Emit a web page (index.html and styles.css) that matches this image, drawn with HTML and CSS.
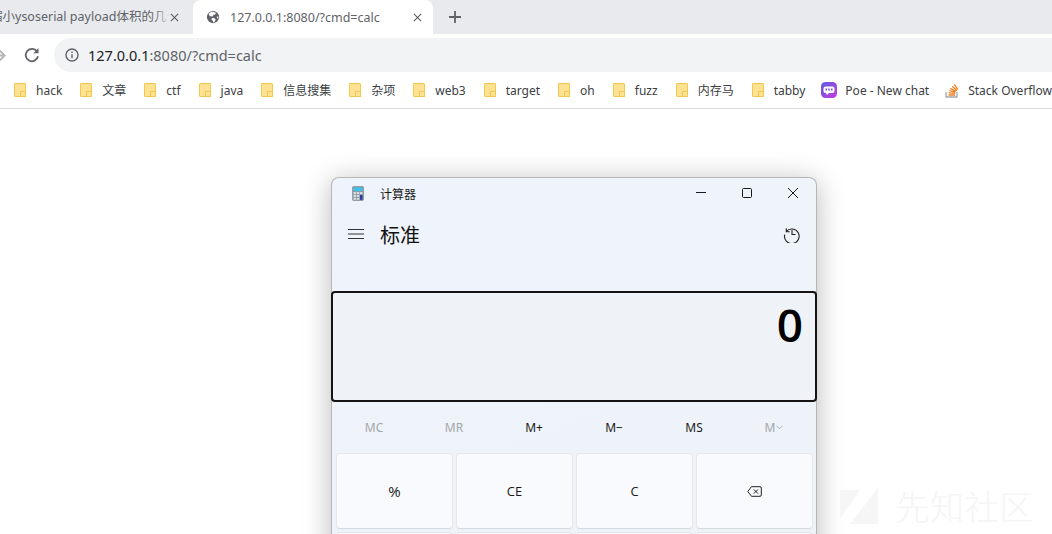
FILE: index.html
```html
<!DOCTYPE html>
<html lang="zh">
<head>
<meta charset="utf-8">
<title>127.0.0.1:8080/?cmd=calc</title>
<link rel="stylesheet" href="styles.css">
</head>
<body>
<header class="browser">
  <div class="tabstrip">
    <div class="tab tab-inactive">
      <span class="tab-title tab-title-clip"><span class="tab-title-inner">缩小ysoserial payload体积的几个方法</span></span>
      <svg class="tab-close" viewBox="0 0 10 10"><path d="M1 1l8 8M9 1l-8 8"/></svg>
    </div>
    <div class="tab tab-active">
      <svg class="globe" viewBox="0 0 16 16"><circle cx="8" cy="8" r="7" fill="#5f6368"/><path fill="#fff" d="M6 2c2 .2 4 .4 5.500 1.600L10 5.500 8.500 5 8 7 5.500 7.500 3.500 6 3 4.200zM7 9l3 .5 1 1.500-1 2-1.500 1.500L7.500 12 6 10.500zM12.500 7l1.500.6-.3 2.400-1.200-1z"/></svg>
      <span class="tab-title">127.0.0.1:8080/?cmd=calc</span>
      <svg class="tab-close" viewBox="0 0 10 10"><path d="M1 1l8 8M9 1l-8 8"/></svg>
    </div>
    <svg class="new-tab" viewBox="0 0 12 12"><path d="M6 0v12M0 6h12"/></svg>
  </div>
  <div class="toolbar">
    <svg class="nav-forward" viewBox="0 0 16 16"><path d="M0 8h13M8 2.500 13.500 8 8 13.500"/></svg>
    <svg class="nav-reload" viewBox="0 0 16 16"><path class="reload-arc" d="M13.300 5A6.200 6.200 0 1 0 14 9.300"/><path class="reload-head" d="M14.500 1v5.200H9.300z"/></svg>
    <div class="omnibox">
      <svg class="info" viewBox="0 0 14 14"><circle cx="7" cy="7" r="6"/><path d="M7 6.200v4M7 3.500v1.500"/></svg>
      <span class="url"><span class="url-host">127.0.0.1</span>:8080/?cmd=calc</span>
    </div>
  </div>
  <nav class="bookmarks">
    <a class="bm"><i class="folder"></i><span>hack</span></a>
    <a class="bm"><i class="folder"></i><span>文章</span></a>
    <a class="bm"><i class="folder"></i><span>ctf</span></a>
    <a class="bm"><i class="folder"></i><span>java</span></a>
    <a class="bm"><i class="folder"></i><span>信息搜集</span></a>
    <a class="bm"><i class="folder"></i><span>杂项</span></a>
    <a class="bm"><i class="folder"></i><span>web3</span></a>
    <a class="bm"><i class="folder"></i><span>target</span></a>
    <a class="bm"><i class="folder"></i><span>oh</span></a>
    <a class="bm"><i class="folder"></i><span>fuzz</span></a>
    <a class="bm"><i class="folder"></i><span>内存马</span></a>
    <a class="bm"><i class="folder"></i><span>tabby</span></a>
    <a class="bm bm-site">
      <svg class="poe" viewBox="0 0 16 16"><defs><linearGradient id="poeg" x1="0" y1="0" x2="1" y2="1"><stop offset="0" stop-color="#5d5cde"/><stop offset="1" stop-color="#c83be0"/></linearGradient></defs><rect width="16" height="16" rx="4.500" fill="url(#poeg)"/><rect x="2.500" y="4.500" width="11" height="6.500" rx="2" fill="#fff"/><path d="M5 11h3l-2 2z" fill="#fff"/><rect x="4.500" y="6.500" width="1.500" height="2" fill="#7a4be0"/><rect x="7.250" y="6.500" width="1.500" height="2" fill="#7a4be0"/><rect x="10" y="6.500" width="1.500" height="2" fill="#7a4be0"/></svg>
      <span>Poe - New chat</span>
    </a>
    <a class="bm bm-site">
      <svg class="so" viewBox="0 0 16 16"><path d="M2 10v5h11v-5" fill="none" stroke="#a6a6a6" stroke-width="1.300"/><path d="M4.500 13h6.500M4.700 10.800l6.400.6M5.300 8.600l6.200 1.600M6.400 6.400l5.600 3M8.200 4.300l4.700 4.200M10.400 2.300l3.300 5" fill="none" stroke="#f48024" stroke-width="1.300"/></svg>
      <span>Stack Overflow</span>
    </a>
  </nav>
</header>
<main class="page">
  <section class="calc">
    <div class="titlebar">
      <svg class="calc-icon" viewBox="0 0 12 15"><rect x=".5" y=".5" width="11" height="14" rx="1" fill="#8f98a3" stroke="#777f88" stroke-width=".6"/><rect x="1.500" y="1.500" width="9" height="3.500" fill="#3bc4ef"/><rect x="1.500" y="6" width="2.500" height="2.200" fill="#d7dbe0"/><rect x="4.800" y="6" width="2.500" height="2.200" fill="#d7dbe0"/><rect x="8" y="6" width="2.500" height="2.200" fill="#d7dbe0"/><rect x="1.500" y="9" width="2.500" height="2.200" fill="#d7dbe0"/><rect x="4.800" y="9" width="2.500" height="2.200" fill="#d7dbe0"/><rect x="1.500" y="12" width="2.500" height="1.800" fill="#d7dbe0"/><rect x="4.800" y="12" width="2.500" height="1.800" fill="#d7dbe0"/><rect x="8" y="9" width="2.500" height="4.800" fill="#2a3f9d"/></svg>
      <span class="calc-title">计算器</span>
      <div class="win-controls">
        <svg class="win-btn" viewBox="0 0 46 16"><path d="M18 15.500h10" transform="translate(0 -8)"/></svg>
        <svg class="win-btn" viewBox="0 0 46 16"><rect x="18.500" y="3.500" width="9" height="9" rx="1"/></svg>
        <svg class="win-btn" viewBox="0 0 46 16"><path d="M18 3l10 10M28 3 18 13"/></svg>
      </div>
    </div>
    <div class="calc-head">
      <svg class="hamburger" viewBox="0 0 16 12"><path d="M0 1.500h16M0 6h16M0 10.500h16"/></svg>
      <h1 class="mode">标准</h1>
      <svg class="history" viewBox="0 0 18 18"><path d="M3.300 3.300v3.400h3.400M3.300 6.500A7.300 7.300 0 1 1 1.700 9.600M9 5v4.500h3.500"/></svg>
    </div>
    <output class="display">0</output>
    <div class="memory">
      <span class="mem mem-off">MC</span>
      <span class="mem mem-off">MR</span>
      <span class="mem">M+</span>
      <span class="mem">M−</span>
      <span class="mem">MS</span>
      <span class="mem mem-off">M<svg class="mem-chev" viewBox="0 0 8 5"><path d="M.500.500 4 4 7.500.500"/></svg></span>
    </div>
    <div class="keys">
      <button class="key">%</button>
      <button class="key">CE</button>
      <button class="key">C</button>
      <button class="key"><svg class="backspace" viewBox="0 0 15 11"><path d="M4.500.700H13a1.300 1.300 0 0 1 1.300 1.300v7A1.300 1.300 0 0 1 13 10.300H4.500L.8 5.500zM6.800 3.400l4.200 4.200M11 3.400 6.800 7.600"/></svg></button>
      <button class="key"></button>
      <button class="key"></button>
      <button class="key"></button>
      <button class="key"></button>
    </div>
  </section>
  <div class="watermark">
    <svg class="wm-logo" viewBox="0 0 38 38"><path d="M0 2h20L0 30zM38 0v36H10z" fill="#f6f6f6"/></svg>
    <span class="wm-text">先知社区</span>
  </div>
</main>
</body>
</html>
```
FILE: styles.css
```css
* { box-sizing: border-box; }
html, body { margin: 0; height: 100%; overflow: hidden; background: #fff; }
body { width: 1052px; height: 534px; font-family: "Noto Sans", "Noto Sans CJK SC", sans-serif; display: flex; flex-direction: column; }

.browser { flex: none; }
.tabstrip { height: 34px; background: #e8eaed; display: flex; align-items: stretch; overflow: hidden; }
.tab { display: flex; align-items: center; height: 34px; flex: none; }
.tab-inactive { width: 193px; padding-right: 14px; }
.tab-active { width: 240px; background: #fff; border-radius: 8px 8px 0 0; padding: 0 11px 0 13px; }
.tab-title { font-size: 12.5px; color: #5f6368; white-space: nowrap; }
.tab-active .tab-title { margin-left: 10px; flex: 1; }
.tab-title-clip { flex: 1; overflow: hidden; position: relative; height: 18px; line-height: 18px; }
.tab-title-clip::after { content: ""; position: absolute; right: 0; top: 0; bottom: 0; width: 16px; background: linear-gradient(to right, rgba(232,234,237,0), #e8eaed); }
.tab-title-inner { display: block; margin-left: -10px; }
.tab-close { width: 9px; height: 9px; flex: none; fill: none; stroke: #5f6368; stroke-width: 1.300; }
.globe { width: 14px; height: 14px; flex: none; }
.new-tab { width: 12px; height: 12px; margin: 11px 0 0 16px; flex: none; fill: none; stroke: #5f6368; stroke-width: 1.800; }

.toolbar { height: 38px; padding-top: 4px; display: flex; align-items: center; background: #fff; position: relative; }
.nav-forward { width: 15px; height: 15px; margin-left: -8px; flex: none; fill: none; stroke: #b4b6b9; stroke-width: 2; }
.nav-reload { width: 16px; height: 16px; margin-left: 17px; flex: none; }
.reload-arc { fill: none; stroke: #5f6368; stroke-width: 1.800; }
.reload-head { fill: #5f6368; }
.omnibox { flex: 1; height: 34px; margin-left: 14px; background: #f1f3f4; border-radius: 17px 0 0 17px; display: flex; align-items: center; padding-left: 11px; }
.info { width: 14px; height: 14px; flex: none; fill: none; stroke: #5f6368; stroke-width: 1.400; }
.url { margin-left: 9px; font-size: 14.500px; color: #5f6368; white-space: nowrap; }
.url-host { color: #202124; }

.bookmarks { height: 37px; border-bottom: 1px solid #dadce0; background: #fff; display: flex; align-items: center; padding-left: 14px; white-space: nowrap; overflow: hidden; }
.bm { display: flex; align-items: center; gap: 10px; margin-right: 18px; font-size: 12px; color: #3c4043; flex: none; }
.folder { display: block; width: 12px; height: 14px; background: #fde293; border: 1px solid #f2c94c; border-radius: 1px; position: relative; }
.folder::after { content: ""; position: absolute; right: -1px; bottom: -1px; width: 4px; height: 4px; border: 1px solid #f2c94c; background: #fde293; }
.bm-site { gap: 8px; margin-right: 17px; margin-left: -2px; }
.poe, .so { width: 16px; height: 16px; flex: none; }

.page { flex: 1; position: relative; overflow: hidden; padding: 68px 0 0 331px; }
.calc { width: 486px; height: 420px; background: #eff3fa; border: 1px solid #b4b6ba; border-bottom: 0; border-radius: 8px 8px 0 0; box-shadow: 0 4px 28px rgba(0,0,0,.28); background-image: linear-gradient(160deg, #eff3fb, #eef3f8); }
.titlebar { height: 31px; display: flex; align-items: center; padding: 0 0 0 20px; }
.calc-icon { width: 12px; height: 15px; flex: none; }
.calc-title { margin-left: 16px; font-size: 12px; color: #1a1a1a; flex: 1; }
.win-controls { display: flex; padding-right: 0; margin-top: -1px; }
.win-btn { width: 46px; height: 16px; fill: none; stroke: #1a1a1a; stroke-width: 1; }
.calc-head { height: 50px; display: flex; align-items: center; padding: 0 15px 0 16px; }
.hamburger { width: 16px; height: 12px; flex: none; fill: none; stroke: #333; stroke-width: 1; }
.mode { flex: 1; margin: 0 0 0 16px; font-size: 20px; font-weight: 400; color: #111; }
.history { width: 18px; height: 18px; flex: none; fill: none; stroke: #222; stroke-width: 1.100; }
.display { display: block; margin: 32px -1px 0; height: 111px; border: 2px solid #141414; border-radius: 4px; background: #eff3f8; text-align: right; padding: 0 12px; font-size: 46px; line-height: 62px; font-weight: 600; color: #000; font-family: "Open Sans", sans-serif; }
.memory { display: grid; grid-template-columns: repeat(6, 80px); padding-left: 2px; height: 51px; align-items: center; }
.mem { text-align: center; font-size: 12px; color: #1a1a1a; }
.mem-off { color: #a3a6aa; }
.mem-chev { width: 7px; height: 5px; margin-left: 1px; vertical-align: 2px; fill: none; stroke: #a3a6aa; stroke-width: 1; }
.keys { display: grid; grid-template-columns: repeat(4, 117px); grid-auto-rows: 76px; gap: 3px; padding-left: 4px; }
.key { background: #f9fafd; border: 1px solid #e5e7eb; border-bottom-color: #d8dade; border-radius: 4px; font: 400 13px "Open Sans", sans-serif; color: #1a1a1a; padding: 0; display: flex; align-items: center; justify-content: center; }
.key:first-child { font-size: 15px; }
.backspace { width: 15px; height: 11px; fill: none; stroke: #222; stroke-width: 1; }

.watermark { position: absolute; left: 840px; top: 378px; display: flex; align-items: center; gap: 17px; }
.wm-logo { width: 38px; height: 38px; flex: none; }
.wm-text { font-size: 34.500px; line-height: 40px; letter-spacing: .2px; color: #f5f5f5; font-weight: 300; white-space: nowrap; }
```
